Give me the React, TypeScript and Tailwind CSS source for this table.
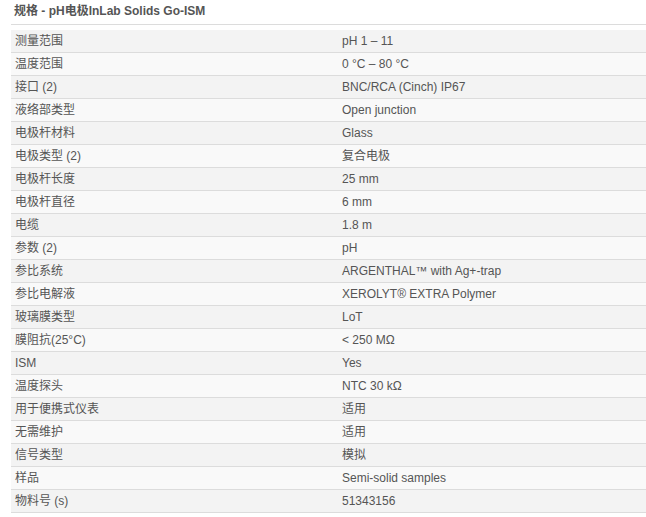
import React from "react";

const rows: [string, string][] = [
  ["测量范围", "pH 1 – 11"],
  ["温度范围", "0 °C – 80 °C"],
  ["接口 (2)", "BNC/RCA (Cinch) IP67"],
  ["液络部类型", "Open junction"],
  ["电极杆材料", "Glass"],
  ["电极类型 (2)", "复合电极"],
  ["电极杆长度", "25 mm"],
  ["电极杆直径", "6 mm"],
  ["电缆", "1.8 m"],
  ["参数 (2)", "pH"],
  ["参比系统", "ARGENTHAL™ with Ag+-trap"],
  ["参比电解液", "XEROLYT® EXTRA Polymer"],
  ["玻璃膜类型", "LoT"],
  ["膜阻抗(25°C)", "< 250 MΩ"],
  ["ISM", "Yes"],
  ["温度探头", "NTC 30 kΩ"],
  ["用于便携式仪表", "适用"],
  ["无需维护", "适用"],
  ["信号类型", "模拟"],
  ["样品", "Semi-solid samples"],
  ["物料号 (s)", "51343156"],
];

export default function App() {
  return (
    <div
      className="w-[646px] h-[517px] overflow-hidden bg-white text-[12px] text-[#555]"
      style={{ fontFamily: '"Liberation Sans", Arial, "Noto Sans CJK SC", sans-serif' }}
    >
      <div className="ml-[11px] w-[660px]">
        <div className="h-[25px] border-b border-[#dcdcdc] pl-[3px] pt-[4px] font-bold leading-[15px]">
          规格 - pH电极InLab Solids Go-ISM
        </div>
        <div className="mt-[5px]">
          {rows.map(([k, v], i) => (
            <div
              key={i}
              className={`flex h-[23px] items-center border-b border-[#dcdcdc] ${
                i % 2 === 0 ? "bg-[#f3f3f3]" : "bg-[#f9f9f9]"
              }`}
            >
              <div className="w-[331px] pl-[4px]">{k}</div>
              <div className="flex-1 pl-[0px]">{v}</div>
            </div>
          ))}
        </div>
      </div>
    </div>
  );
}
